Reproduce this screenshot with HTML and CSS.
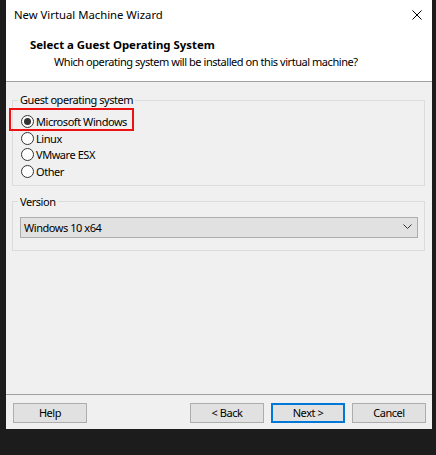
FILE: index.html
```html
<!DOCTYPE html>
<html>
<head>
<meta charset="utf-8">
<link rel="stylesheet" href="styles.css">
</head>
<body>
<div class="window">
  <div class="titlebar">
    <span class="title">New Virtual Machine Wizard</span>
    <svg class="close" width="10" height="10" viewBox="0 0 10 10"><path d="M0.5 0.5L9.5 9.5M9.5 0.5L0.5 9.5" stroke="#000" stroke-width="1" fill="none"/></svg>
  </div>
  <div class="header">
    <div class="h-title">Select a Guest Operating System</div>
    <div class="h-sub">Which operating system will be installed on this virtual machine?</div>
  </div>
  <div class="main">
    <fieldset class="group">
      <legend>Guest operating system</legend>
      <div class="radio-row"><span class="radio checked"></span><span>Microsoft Windows</span></div>
      <div class="radio-row"><span class="radio"></span><span>Linux</span></div>
      <div class="radio-row"><span class="radio"></span><span>VMware ESX</span></div>
      <div class="radio-row"><span class="radio"></span><span>Other</span></div>
    </fieldset>
    <fieldset class="group version">
      <legend>Version</legend>
      <div class="select">
        <span>Windows 10 x64</span>
        <svg width="9" height="6" viewBox="0 0 9 6"><path d="M0.5 0.5L4.5 4.5L8.5 0.5" stroke="#333" stroke-width="1" fill="none"/></svg>
      </div>
    </fieldset>
    <div class="highlight"></div>
  </div>
  <div class="footer">
    <button class="btn">Help</button>
    <div class="spacer"></div>
    <button class="btn">&lt; Back</button>
    <button class="btn default">Next &gt;</button>
    <button class="btn">Cancel</button>
  </div>
</div>
</body>
</html>
```
FILE: styles.css
```css
html, body {
  margin: 0;
  padding: 0;
  background: #1c1c1c;
  font-family: "Noto Sans", "Liberation Sans", sans-serif;
  font-size: 11px;
  letter-spacing: -0.45px;
  color: #000;
}
body {
  padding: 0 0 0 6px;
  height: 455px;
  box-sizing: border-box;
}
.window {
  width: 426px;
  height: 429px;
  background: #f0f0f0;
  display: flex;
  flex-direction: column;
  position: relative;
}
.titlebar {
  height: 31px;
  background: #fff;
  display: flex;
  align-items: center;
  justify-content: space-between;
  padding: 0 10px 0 8px;
}
.title {
  font-size: 11.3px;
  letter-spacing: 0;
  line-height: 16px;
  margin-top: -1px;
}
.close {
  display: block;
  margin-top: -1px;
}
.header {
  background: #fff;
  height: 51px;
  border-bottom: 1px solid #a0a0a0;
  box-sizing: border-box;
  padding: 5px 0 0 24px;
}
.h-title {
  font-weight: bold;
  font-size: 11.4px;
  letter-spacing: 0;
  line-height: 17px;
}
.h-sub {
  padding-left: 24px;
  line-height: 17px;
}
.main {
  flex: 1;
  padding: 11px 7px 0 6px;
  position: relative;
}
.group {
  margin: 0;
  border: 1px solid #dcdcdc;
  padding: 6px 8px 5px 8px;
}
.group legend {
  padding: 0 2px;
  margin-left: -3px;
  line-height: 14px;
}
.radio-row {
  display: flex;
  align-items: center;
  height: 16.7px;
  gap: 2px;
}
.radio {
  width: 13px;
  height: 13px;
  box-sizing: border-box;
  border: 1px solid #333;
  border-radius: 50%;
  background: #fff;
  display: flex;
  align-items: center;
  justify-content: center;
}
.radio.checked::after {
  content: "";
  width: 7px;
  height: 7px;
  border-radius: 50%;
  background: #333;
}
.version {
  margin-top: 9px;
  padding: 8px 6px 12px 7px;
}
.version legend {
  margin-left: -2px;
}
.select {
  height: 21px;
  box-sizing: border-box;
  background: #e1e1e1;
  border: 1px solid #adadad;
  display: flex;
  align-items: center;
  justify-content: space-between;
  padding: 0 5px 0 3px;
}
.highlight {
  position: absolute;
  left: 3px;
  top: 26px;
  width: 125px;
  height: 23px;
  border: 2px solid #ee1111;
  box-sizing: border-box;
}
.footer {
  border-top: 1px solid #a0a0a0;
  height: 35px;
  box-sizing: border-box;
  display: flex;
  align-items: flex-start;
  padding: 8px 6px 0 7px;
  gap: 7px;
}
.spacer {
  flex: 1;
}
.btn {
  width: 74px;
  height: 20px;
  box-sizing: border-box;
  background: #e1e1e1;
  border: 1px solid #adadad;
  font-family: inherit;
  font-size: 11px;
  letter-spacing: -0.45px;
  color: #000;
  padding: 0;
  margin: 0;
  line-height: 16px;
}
.btn.default {
  border: 2px solid #0078d7;
}
```
